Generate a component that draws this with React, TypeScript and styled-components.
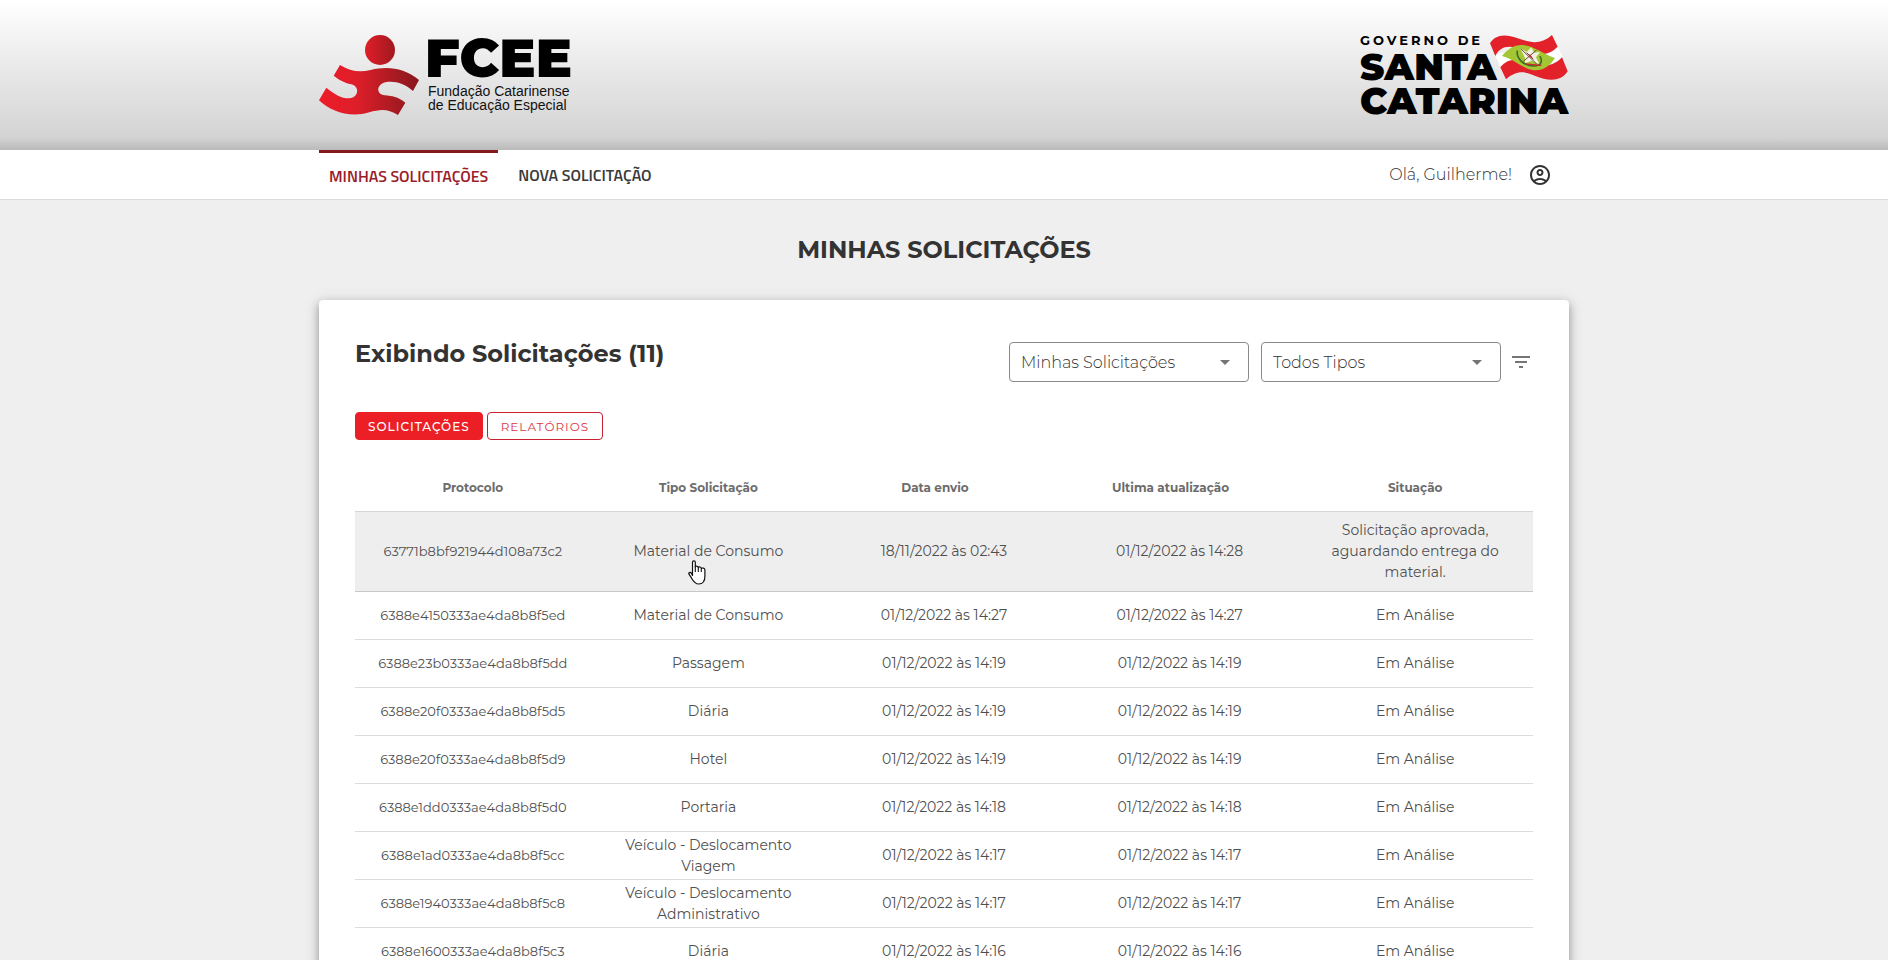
import React from 'react';
import styled, { createGlobalStyle } from 'styled-components';
import { MdArrowDropDown, MdFilterList, MdOutlineAccountCircle } from 'react-icons/md';

const GlobalStyle = createGlobalStyle`
  *, *::before, *::after { box-sizing: border-box; }
  body {
    margin: 0;
    background: #efefef;
    color: #333;
    font-family: Montserrat, Inter, 'Open Sans', sans-serif;
    font-size: 14px;
  }
`;

const Container = styled.div`
  width: 100%;
  max-width: 1250px;
  margin: 0 auto;
  display: flex;
  align-items: center;
  justify-content: space-between;
`;

const Header = styled.header`
  display: flex;
  height: 150px;
  background:
    linear-gradient(rgba(0, 0, 0, 0) 138px, rgba(0, 0, 0, 0.1) 150px),
    linear-gradient(#ffffff, #cfcfcf);
`;

const Nav = styled.nav`
  display: flex;
  height: 50px;
  background: #fff;
  border-bottom: 1px solid #dcdcdc;
`;

const Tabs = styled.div`
  display: flex;
  align-self: stretch;
  gap: 10px;
`;

const Tab = styled.a<{ $active?: boolean }>`
  display: flex;
  align-items: center;
  padding: 0 10px;
  border-top: ${(p) => (p.$active ? '3px solid #85191f' : '0')};
  color: ${(p) => (p.$active ? '#9c1c2a' : '#3a3a3a')};
  font-family: 'Titillium Web', 'Exo 2', Roboto, sans-serif;
  font-size: 16px;
  font-weight: 600;
  line-height: 24px;
  text-decoration: none;
  white-space: nowrap;
`;

const User = styled.div`
  display: flex;
  align-items: center;
  gap: 16px;
  padding-right: 17px;
  font-size: 16px;
  font-weight: 300;
`;

const IconButton = styled.button`
  display: flex;
  padding: 0;
  border: 0;
  background: none;
  color: inherit;
  font-size: 24px;
  cursor: pointer;
`;

const PageTitle = styled.h1`
  margin: 0;
  padding: 36px 0;
  font-size: 24px;
  font-weight: 700;
  line-height: 28px;
  text-align: center;
`;

const Card = styled.main`
  width: 100%;
  max-width: 1250px;
  margin: 0 auto 48px;
  padding: 42px 36px;
  border-radius: 4px;
  background: #fff;
  box-shadow: 0 4px 8px rgba(0, 0, 0, 0.3), 0 2px 16px rgba(0, 0, 0, 0.14);
`;

const CardTop = styled.div`
  display: flex;
  justify-content: space-between;
  align-items: flex-start;
`;

const CardTitle = styled.h2`
  margin: 0;
  font-size: 24px;
  font-weight: 700;
  line-height: 24px;
`;

const Filters = styled.div`
  display: flex;
  align-items: center;
  gap: 12px;
  color: #757575;
`;

const SelectBox = styled.label`
  display: grid;
  align-items: center;
  width: 240px;

  & > * { grid-area: 1 / 1; }

  svg {
    justify-self: end;
    margin-right: 12px;
    font-size: 24px;
    pointer-events: none;
  }
`;

const Select = styled.select`
  appearance: none;
  width: 100%;
  height: 40px;
  padding: 0 36px 0 11px;
  border: 1px solid #8a8a8a;
  border-radius: 4px;
  background: #fff;
  color: #333;
  font-family: inherit;
  font-size: 16px;
  font-weight: 300;
`;

const FilterButton = styled(IconButton)`
  margin-left: -4px;
`;

const Switcher = styled.div`
  display: flex;
  gap: 4px;
  margin-top: 30px;
`;

const SwitchButton = styled.button<{ $active?: boolean }>`
  height: 28px;
  padding: 0 ${(p) => (p.$active ? 12 : 13)}px;
  border: 1px solid ${(p) => (p.$active ? '#ec1f27' : '#c8202f')};
  border-radius: 4px;
  background: ${(p) => (p.$active ? '#ec1f27' : '#fff')};
  color: ${(p) => (p.$active ? '#fff' : '#dc3545')};
  font-family: inherit;
  font-size: 12px;
  font-weight: ${(p) => (p.$active ? 500 : 400)};
  letter-spacing: 1px;
  cursor: pointer;
`;

const Table = styled.table`
  width: 100%;
  margin-top: 24px;
  border-spacing: 0;
  table-layout: fixed;
`;

const HeadCell = styled.th<{ $sortable?: boolean }>`
  height: 48px;
  padding: 0 ${(p) => (p.$sortable ? 34 : 16)}px 0 16px;
  border-bottom: 1px solid #d6d6d6;
  color: #6c6c6c;
  font-size: 12px;
  font-weight: 700;
`;

const Row = styled.tr<{ $hovered?: boolean }>`
  background: ${(p) => (p.$hovered ? '#eeeeee' : '#fff')};

  td { border-bottom: 1px solid ${(p) => (p.$hovered ? '#c8c8c8' : '#dcdcdc')}; }
`;

const Cell = styled.td<{ $kind?: 'code' | 'status' }>`
  position: relative;
  height: 48px;
  padding: ${(p) => (p.$kind === 'status' ? 8 : 2)}px 16px;
  color: #505050;
  font-size: ${(p) => (p.$kind === 'code' ? 13 : 14)}px;
  line-height: 21px;
  text-align: center;
`;

const HandCursor = styled.svg`
  position: absolute;
  top: 48px;
  left: calc(50% - 20px);
`;

const FceeLogo = () => (
  <svg width="254" height="82" viewBox="0 0 254 82" role="img" aria-label="FCEE">
    <defs>
      <linearGradient id="figure" gradientUnits="userSpaceOnUse" x1="60" y1="0" x2="350" y2="0">
        <stop offset="0" stopColor="#ee1c2a" />
        <stop offset="0.4" stopColor="#dc1e29" />
        <stop offset="1" stopColor="#8a181d" />
      </linearGradient>
      <linearGradient id="head" x1="0" y1="0" x2="1" y2="0">
        <stop offset="0" stopColor="#e01e29" />
        <stop offset="1" stopColor="#a0191f" />
      </linearGradient>
    </defs>
    <g transform="scale(0.33333) translate(-57 -42)">
      <circle cx="240" cy="90" r="45" fill="url(#head)" />
      <path
        fill="url(#figure)"
        d="M120 135 C150 154 178 158 212 150 C262 138 312 143 357 180 L339 213 C312 190 284 182 256 187 C230 193 226 222 254 226 C278 229 292 229 316 248 L294 285 C264 266 240 267 208 277 C152 294 92 276 57 241 L79 203 C102 222 126 236 148 235 C176 232 180 200 154 193 C132 188 118 180 101 167 Z"
      />
    </g>
    <text x="106" y="43" fontFamily="Montserrat, Inter, sans-serif" fontSize="54" fontWeight="900">FCEE</text>
    <g fontFamily="'Liberation Sans', Arial, sans-serif" fontSize="14" fill="#111">
      <text x="109" y="62">Fundação Catarinense</text>
      <text x="109" y="76">de Educação Especial</text>
    </g>
  </svg>
);

const StateLogo = () => (
  <svg width="210" height="82" viewBox="0 0 210 82" role="img" aria-label="Governo de Santa Catarina">
    <g fontFamily="Montserrat, Inter, sans-serif">
      <text x="1" y="11" fontSize="13" fontWeight="700" letterSpacing="3">GOVERNO DE</text>
      <text x="1" y="46" fontSize="37" fontWeight="900">SANTA</text>
      <text x="1" y="80" fontSize="37" fontWeight="900">CATARINA</text>
    </g>
    <g transform="scale(0.33333) translate(-57 -42)">
      <path fill="#fff" d="M466 106 C520 76 590 130 650 74 L668 110 C610 165 540 105 484 148 Z" />
      <path fill="#e3212b" d="M450 70 C462 50 484 42 512 49 C556 60 592 84 636 45 L653 80 C612 122 566 92 524 82 C496 76 476 86 466 108 Z" />
      <path fill="#e3212b" d="M481 142 C500 116 530 114 560 126 C600 140 634 146 666 112 L683 154 C664 186 624 184 586 168 C552 152 528 152 498 178 Z" />
      <path fill="#a3c733" d="M486 108 C506 84 528 72 554 76 C584 80 612 104 645 114 C628 140 606 154 578 150 C548 146 520 116 486 108 Z" />
      <path fill="none" stroke="#3f6b2a" strokeWidth="5" d="M532 92 C528 116 552 138 582 138 C604 138 608 124 600 108" />
      <path fill="#f4efe4" d="M540 84 L560 96 L574 82 L582 98 L600 96 L588 112 L598 132 L574 122 L556 130 L554 112 Z" />
      <path fill="none" stroke="#6d4a3a" strokeWidth="3" d="M542 86 L590 132 M590 90 L550 124 M560 98 L580 118" />
      <path fill="none" stroke="#c8282c" strokeWidth="4" d="M556 132 L604 136 M568 104 L576 114" />
    </g>
  </svg>
);

const columns = [
  { label: 'Protocolo' },
  { label: 'Tipo Solicitação' },
  { label: 'Data envio', sortable: true },
  { label: 'Ultima atualização', sortable: true },
  { label: 'Situação' },
];

const requests = [
  ['63771b8bf921944d108a73c2', 'Material de Consumo', '18/11/2022 às 02:43', '01/12/2022 às 14:28', 'Solicitação aprovada, aguardando entrega do material.'],
  ['6388e4150333ae4da8b8f5ed', 'Material de Consumo', '01/12/2022 às 14:27', '01/12/2022 às 14:27', 'Em Análise'],
  ['6388e23b0333ae4da8b8f5dd', 'Passagem', '01/12/2022 às 14:19', '01/12/2022 às 14:19', 'Em Análise'],
  ['6388e20f0333ae4da8b8f5d5', 'Diária', '01/12/2022 às 14:19', '01/12/2022 às 14:19', 'Em Análise'],
  ['6388e20f0333ae4da8b8f5d9', 'Hotel', '01/12/2022 às 14:19', '01/12/2022 às 14:19', 'Em Análise'],
  ['6388e1dd0333ae4da8b8f5d0', 'Portaria', '01/12/2022 às 14:18', '01/12/2022 às 14:18', 'Em Análise'],
  ['6388e1ad0333ae4da8b8f5cc', 'Veículo - Deslocamento Viagem', '01/12/2022 às 14:17', '01/12/2022 às 14:17', 'Em Análise'],
  ['6388e1940333ae4da8b8f5c8', 'Veículo - Deslocamento Administrativo', '01/12/2022 às 14:17', '01/12/2022 às 14:17', 'Em Análise'],
  ['6388e1600333ae4da8b8f5c3', 'Diária', '01/12/2022 às 14:16', '01/12/2022 às 14:16', 'Em Análise'],
];

export default function App() {
  return (
    <>
      <GlobalStyle />
      <Header>
        <Container>
          <FceeLogo />
          <StateLogo />
        </Container>
      </Header>
      <Nav>
        <Container>
          <Tabs>
            <Tab href="#minhas" $active>MINHAS SOLICITAÇÕES</Tab>
            <Tab href="#nova">NOVA SOLICITAÇÃO</Tab>
          </Tabs>
          <User>
            <span>Olá, Guilherme!</span>
            <IconButton type="button" aria-label="Conta">
              <MdOutlineAccountCircle />
            </IconButton>
          </User>
        </Container>
      </Nav>
      <PageTitle>MINHAS SOLICITAÇÕES</PageTitle>
      <Card>
        <CardTop>
          <CardTitle>Exibindo Solicitações (11)</CardTitle>
          <Filters>
            <SelectBox>
              <Select aria-label="Solicitações"><option>Minhas Solicitações</option></Select>
              <MdArrowDropDown />
            </SelectBox>
            <SelectBox>
              <Select aria-label="Tipo"><option>Todos Tipos</option></Select>
              <MdArrowDropDown />
            </SelectBox>
            <FilterButton type="button" aria-label="Filtrar">
              <MdFilterList />
            </FilterButton>
          </Filters>
        </CardTop>
        <Switcher>
          <SwitchButton type="button" $active>SOLICITAÇÕES</SwitchButton>
          <SwitchButton type="button">RELATÓRIOS</SwitchButton>
        </Switcher>
        <Table>
          <thead>
            <tr>
              {columns.map((c) => (
                <HeadCell key={c.label} scope="col" $sortable={c.sortable}>{c.label}</HeadCell>
              ))}
            </tr>
          </thead>
          <tbody>
            {requests.map(([code, type, sent, updated, status], i) => (
              <Row key={code} $hovered={i === 0}>
                <Cell $kind="code">{code}</Cell>
                <Cell>
                  {type}
                  {i === 0 && (
                    <HandCursor width="18" height="25" viewBox="0 0 18 25" aria-hidden="true">
                      <path
                        fill="#fff"
                        stroke="#111"
                        strokeWidth="1.2"
                        strokeLinejoin="round"
                        d="M4.5 15.5 V2.2 C4.5 0.4 7.3 0.4 7.3 2.2 V7 C7.8 5.8 10.2 6 10.3 7.6 C11 6.5 13.2 6.8 13.3 8.4 C14.4 7.6 16.9 8 16.9 10 V16 C16.9 21 14.5 24 10.8 24 C7 24 5.4 21.5 3.6 18.2 L1 14.2 C0.3 12.8 2.2 11.8 3.2 13 Z"
                      />
                      <path fill="none" stroke="#111" strokeWidth="1.1" d="M7.3 6.5 V12 M10.3 7.5 V12 M13.3 8.5 V12" />
                    </HandCursor>
                  )}
                </Cell>
                <Cell>{sent}</Cell>
                <Cell>{updated}</Cell>
                <Cell $kind="status">{status}</Cell>
              </Row>
            ))}
          </tbody>
        </Table>
      </Card>
    </>
  );
}
